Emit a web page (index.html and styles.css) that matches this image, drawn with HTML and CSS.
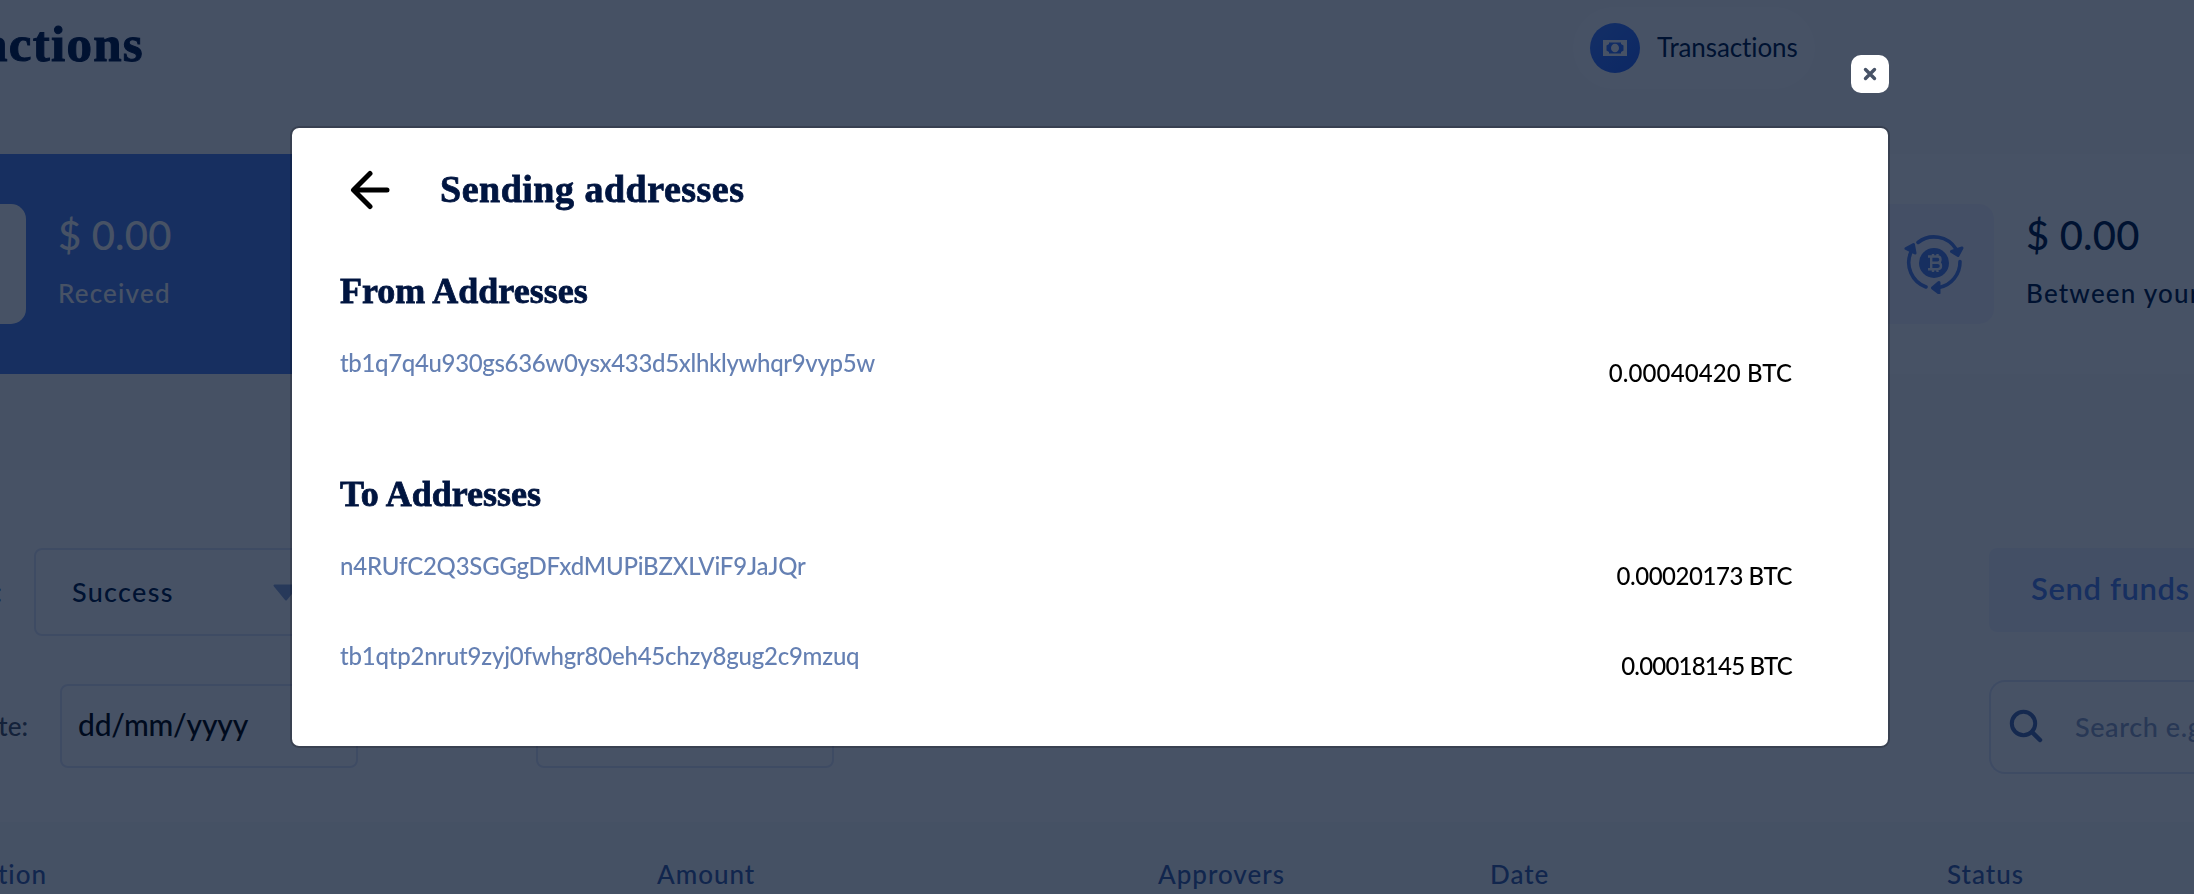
FILE: index.html
```html
<!DOCTYPE html>
<html lang="en">
<head>
<meta charset="utf-8">
<title>Transactions</title>
<link rel="stylesheet" href="styles.css">
</head>
<body>
<div class="page">
  <header class="topbar">
    <h1 class="topbar-title">Transactions</h1>
    <div class="pill">
      <span class="pill-icon">
        <svg width="24" height="16" viewBox="0 0 24 16"><path fill="#fff" fill-rule="evenodd" d="M0 0h24v16H0zM6 2.500v1.500l-2.500 1.500v5L6 12v1.500h12V12l2.500-1.500v-5L18 4V2.500z"/><ellipse cx="12" cy="8" rx="4" ry="4.300" fill="#fff"/></svg>
      </span>
      <span class="pill-label">Transactions</span>
    </div>
  </header>

  <section class="cards">
    <article class="card card-received">
      <div class="card-tile"></div>
      <div class="card-text">
        <p class="card-value">$ 0.00</p>
        <p class="card-label">Received</p>
      </div>
    </article>
    <article class="card card-between">
      <div class="card-tile">
        <svg width="60" height="60" viewBox="0 0 60 60">
          <g fill="none" stroke="#5281ec" stroke-width="3.600" stroke-linecap="round">
            <path d="M14 8.500A26 26 0 0 1 52 15"/>
            <path d="M56 27.500A26 26 0 0 1 35 53.500"/>
            <path d="M22 53A26 26 0 0 1 7 18"/>
          </g>
          <g fill="#5281ec" stroke="#5281ec" stroke-width="3" stroke-linejoin="round">
            <path d="M47.500 17.500 58 14 54 21.500z"/>
            <path d="M2 14.500 9.500 10.500 11 19z"/>
            <path d="M28.500 54 35 48.500V59z"/>
          </g>
          <circle cx="30" cy="29" r="15" fill="#5281ec"/>
          <path fill="none" stroke="#f1f3ff" stroke-width="2.400" d="M24 22.500h9.500q3 0 3 3t-3 3.300H28M33.500 28.800q3.500 0 3.500 3.200t-3.500 3.200H24M27.200 22.500v12.700M29 20v2.500M33.500 20v2.500M29 35.500v2.500M33.500 35.500v2.500"/>
        </svg>
      </div>
      <div class="card-text">
        <p class="card-value">$ 0.00</p>
        <p class="card-label">Between your</p>
      </div>
    </article>
  </section>

  <section class="panel">
    <div class="filters filters-top">
      <span class="filter-name filter-status">Status:</span>
      <div class="select">
        <span class="select-value">Success</span>
        <svg width="26" height="17" viewBox="0 0 26 17"><path fill="#8ea6d8" stroke="#8ea6d8" stroke-width="2" stroke-linejoin="round" d="M1.500 1.500h23L13 15.500z"/></svg>
      </div>
      <div class="send-button">Send funds</div>
    </div>
    <div class="filters filters-bottom">
      <span class="filter-name filter-date">Date:</span>
      <div class="date-input">dd/mm/yyyy</div>
      <div class="date-input date-input-end"></div>
      <div class="search">
        <svg width="36" height="36" viewBox="0 0 36 36" fill="none" stroke="#4b6bb0" stroke-width="4" stroke-linecap="round"><circle cx="15.500" cy="14.500" r="11.700"/><path stroke-width="4.500" d="M24 23 32 31"/></svg>
        <span class="search-text">Search e.g.</span>
      </div>
    </div>
    <div class="table-head">
      <span class="col-first"><span>Transaction</span></span>
      <span>Amount</span>
      <span>Approvers</span>
      <span>Date</span>
      <span>Status</span>
    </div>
  </section>
</div>

<div class="overlay">
  <button class="close" aria-label="Close">
    <svg width="14" height="14" viewBox="0 0 14 14" fill="none" stroke="#475266" stroke-width="3.400" stroke-linecap="round"><path d="M2.500 2.500 11.500 11.500M11.500 2.500 2.500 11.500"/></svg>
  </button>
  <div class="modal">
    <div class="modal-head">
      <svg width="40" height="40" viewBox="0 0 40 40" fill="none" stroke="#000" stroke-width="5" stroke-linecap="round" stroke-linejoin="round"><path d="M20 3.500 3.500 20 20 36.500M4.500 20H37"/></svg>
      <h2 class="modal-title">Sending addresses</h2>
    </div>
    <section class="group">
      <h3 class="group-title">From Addresses</h3>
      <div class="row">
        <span class="address">tb1q7q4u930gs636w0ysx433d5xlhklywhqr9vyp5w</span>
        <span class="amount">0.00040420 BTC</span>
      </div>
    </section>
    <section class="group group-to">
      <h3 class="group-title">To Addresses</h3>
      <div class="row">
        <span class="address address-legacy">n4RUfC2Q3SGGgDFxdMUPiBZXLViF9JaJQr</span>
        <span class="amount amount-tight">0.00020173 BTC</span>
      </div>
      <div class="row">
        <span class="address address-legacy">tb1qtp2nrut9zyj0fwhgr80eh45chzy8gug2c9mzuq</span>
        <span class="amount amount-tighter">0.00018145 BTC</span>
      </div>
    </section>
  </div>
</div>
</body>
</html>
```
FILE: styles.css
```css
* { box-sizing: border-box; }

body {
  margin: 0;
  font-family: Lato, "Open Sans", sans-serif;
  font-weight: 500;
  font-variant-ligatures: none;
  color: #001947;
}

h1, h2, h3, p { margin: 0; }

.page {
  width: 2194px;
  height: 894px;
  overflow: hidden;
  background: #f9f9fc;
}

/* Top bar */
.topbar {
  display: flex;
  align-items: flex-start;
  height: 154px;
}

.topbar-title {
  display: flex;
  justify-content: flex-end;
  width: 144px;
  margin-top: 14px;
  font: bold 51px/60px "Liberation Serif", serif;
  letter-spacing: 1.3px;
  -webkit-text-stroke: 1px;
}

.pill {
  display: flex;
  align-items: center;
  gap: 17px;
  width: 242px;
  height: 82px;
  margin: 7px 0 0 1429px;
  padding-left: 17px;
  border-radius: 41px;
  background: #fff;
}

.pill-icon {
  display: flex;
  align-items: center;
  justify-content: center;
  width: 50px;
  height: 50px;
  border-radius: 50%;
  background: linear-gradient(135deg, #4680ff, #2d68fb);
}

.pill-label {
  padding-bottom: 3px;
  font-size: 26px;
  font-weight: 400;
  letter-spacing: -0.1px;
}

/* Summary cards */
.cards {
  display: flex;
  justify-content: space-between;
  height: 220px;
}

.card {
  display: flex;
  gap: 32px;
  padding-top: 50px;
}

.card-received {
  width: 900px;
  background: #5281ec;
  color: #fff;
}

.card-between {
  width: 394px;
  padding-left: 74px;
  overflow: hidden;
  background: #fff;
}

.card-tile {
  display: flex;
  flex: none;
  align-items: center;
  justify-content: center;
  width: 120px;
  height: 120px;
  border-radius: 15px;
  background: #f5f4ff;
}

.card-received .card-tile {
  margin-left: -94px;
  background: #fff;
}

.card-text { white-space: nowrap; }

.card-value {
  margin-top: 3px;
  font-size: 40px;
  line-height: 56px;
  letter-spacing: 0.2px;
}

.card-label {
  margin-top: 10px;
  font-size: 26px;
  line-height: 40px;
  letter-spacing: 1.2px;
}

/* Filters and table */
.panel {
  margin-top: 96px;
  padding-top: 78px;
  background: #fff;
}

.filters {
  display: flex;
  align-items: flex-start;
}

.filters-top { height: 132px; }

.filters-bottom { height: 142px; }

.filter-name {
  display: flex;
  justify-content: flex-end;
  font-size: 26px;
  color: #4a5266;
}

.filter-status {
  width: 2px;
  margin-right: 32px;
  padding-top: 28px;
}

.filter-date {
  width: 28px;
  margin-right: 32px;
  padding-top: 30px;
}

.select {
  display: flex;
  align-items: center;
  justify-content: space-between;
  width: 298px;
  height: 88px;
  padding: 0 31px 0 36px;
  border: 2px solid #dee5f8;
  border-radius: 8px;
}

.select-value {
  padding-bottom: 2px;
  font-size: 27px;
  letter-spacing: 1.3px;
}

.send-button {
  display: flex;
  align-items: center;
  width: 205px;
  height: 84px;
  margin-left: auto;
  padding: 0 0 4px 42px;
  border-radius: 8px 0 0 8px;
  background: #f1f5ff;
  color: #5281ec;
  font-size: 31px;
  font-weight: 600;
  letter-spacing: 0.6px;
  white-space: nowrap;
}

.date-input {
  display: flex;
  align-items: center;
  width: 298px;
  height: 84px;
  margin-top: 4px;
  padding: 0 0 5px 16px;
  border: 2px solid #dee5f8;
  border-radius: 8px;
  color: #000;
  font-size: 30px;
  letter-spacing: -0.2px;
}

.date-input-end { margin-left: 178px; }

.search {
  display: flex;
  align-items: center;
  gap: 31px;
  width: 205px;
  height: 94px;
  margin-left: auto;
  padding-left: 17px;
  border: 2px solid #dee5f8;
  border-right: 0;
  border-radius: 16px 0 0 16px;
  overflow: hidden;
}

.search svg { flex: none; }

.search-text {
  padding-bottom: 2px;
  color: #90a0c6;
  font-size: 27px;
  letter-spacing: 0.6px;
  white-space: nowrap;
}

.table-head {
  display: grid;
  grid-template-columns: 657px 501px 332px 457px 1fr;
  height: 104px;
  background: #f8f9fc;
  color: #3e60aa;
  font-size: 26px;
  line-height: 104px;
  letter-spacing: 1px;
}

.col-first {
  display: flex;
  justify-content: flex-end;
  width: 47px;
}

/* Modal */
.overlay {
  position: fixed;
  inset: 0;
  padding: 126px 0 0 290px;
  background: rgba(0, 15, 42, 0.72);
}

.close {
  position: absolute;
  top: 55px;
  left: 1851px;
  display: flex;
  align-items: center;
  justify-content: center;
  width: 38px;
  height: 38px;
  padding: 0;
  border: 0;
  border-radius: 10px;
  background: #fff;
}

.modal {
  width: 1600px;
  height: 622px;
  padding: 37px 96px 0 48px;
  border: 2px solid rgba(0, 0, 0, 0.2);
  border-radius: 9px;
  background: #fff;
  background-clip: padding-box;
}

.modal-head {
  display: flex;
  align-items: center;
  gap: 50px;
  height: 48px;
  padding-left: 10px;
}

.modal-head svg { margin-top: 2px; }

.modal-title {
  font: bold 38px/48px "Liberation Serif", serif;
  letter-spacing: 0.5px;
  color: #001540;
  -webkit-text-stroke: 0.8px;
}

.group { margin-top: 54px; }

.group-to { margin-top: 37px; }

.group-title {
  margin-bottom: 28px;
  font: bold 36px/48px "Liberation Serif", serif;
  color: #001540;
  -webkit-text-stroke: 0.8px;
}

.group-to .group-title { margin-top: 36px; }

.row {
  display: flex;
  justify-content: space-between;
  height: 90px;
  font-size: 24px;
  line-height: 40px;
}

.address {
  color: #6580b3;
  letter-spacing: -0.34px;
}

.address-legacy { letter-spacing: -0.22px; }

.amount {
  padding-top: 10px;
  color: #000;
  letter-spacing: 0.1px;
}

.amount-tight { letter-spacing: -0.45px; }

.amount-tighter { letter-spacing: -0.78px; }
```
